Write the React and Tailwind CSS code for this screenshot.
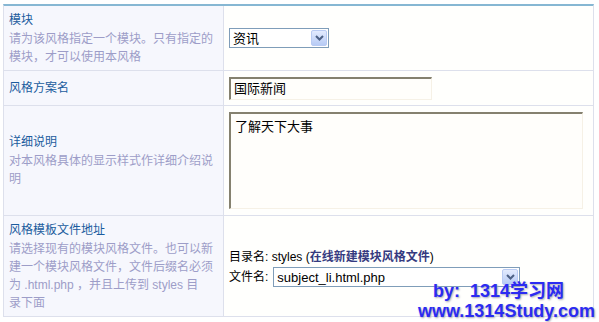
import React from 'react';

const font = { fontFamily: '"Liberation Sans", "Noto Sans CJK SC", sans-serif' };

function DropButton() {
  return (
    <div className="w-[16px] h-[16px] mr-[1px] rounded-[2px] border border-[#b9cbf3] bg-gradient-to-b from-[#e3ebfe] to-[#b7cbf5] flex items-center justify-center">
      <svg width="9" height="6" viewBox="0 0 9 6">
        <path d="M1 1 L4.5 4.5 L8 1" stroke="#4d6185" strokeWidth="2" fill="none" />
      </svg>
    </div>
  );
}

function Select({ value, className }) {
  return (
    <div className={`border border-[#7f9db9] bg-white flex items-center justify-between ${className}`}>
      <span className="pl-[3px] text-[13px] text-black leading-none">{value}</span>
      <DropButton />
    </div>
  );
}

function Label({ title, children }) {
  return (
    <div className="pl-[5px] pr-[2px] text-[12px] leading-[18px]">
      <div className="text-[#1b5c9e] mb-[1px]">{title}</div>
      {children && <div className="text-[#9d9dc8]">{children}</div>}
    </div>
  );
}

function Row({ h, label, children, last }) {
  return (
    <div className={`grid grid-cols-[220px_1fr] ${h} ${last ? '' : 'border-b border-[#dde0ec]'}`}>
      <div className="bg-[#f6f7fd] border-r border-[#dde0ec] flex items-center">{label}</div>
      <div className="bg-[#fffffd] flex items-center pl-[5px]">{children}</div>
    </div>
  );
}

export default function App() {
  return (
    <div className="w-[599px] h-[322px] bg-white relative overflow-hidden" style={font}>
      <div className="ml-[3px] mt-[4px] w-[591px] border-t-2 border-t-[#86b7d3] border-x border-b border-[#dde0ec]">
        <Row
          h="h-[65px]"
          label={
            <Label title="模块">
              请为该风格指定一个模块。只有指定的<br />模块，才可以使用本风格
            </Label>
          }
        >
          <Select value="资讯" className="w-[100px] h-[20px]" />
        </Row>

        <Row h="h-[35px]" label={<Label title="风格方案名" />}>
          <div className="w-[203px] h-[23px] border-t-2 border-l-2 border-[#85816f] border-r border-b border-r-[#f6f1e6] border-b-[#f6f1e6] bg-[#fffefb] flex items-center pl-[3px] text-[13px] text-black">
            国际新闻
          </div>
        </Row>

        <Row
          h="h-[110px]"
          label={
            <Label title="详细说明">
              对本风格具体的显示样式作详细介绍说<br />明
            </Label>
          }
        >
          <div className="w-[354px] h-[97px] border-t-2 border-l-2 border-[#85816f] border-r border-b border-r-[#f6f1e6] border-b-[#f6f1e6] bg-[#fffefb] self-start mt-[6px] pl-[4px] pt-[5px] text-[13px] leading-[16px] text-black">
            了解天下大事
          </div>
        </Row>

        <Row
          h="h-[100px]"
          last
          label={
            <Label title="风格模板文件地址">
              请选择现有的模块风格文件。也可以新<br />
              建一个模块风格文件，文件后缀名必须<br />
              为 .html.php ，并且上传到 styles 目<br />
              录下面
            </Label>
          }
        >
          <div className="text-[12px] text-black mt-[3px]">
            <div className="leading-[18px]">
              目录名:&nbsp;styles (<span className="font-bold text-[#353a80]">在线新建模块风格文件</span>)
            </div>
            <div className="flex items-center mt-[1px]">
              <span className="mr-[5px]">文件名:</span>
              <Select value="subject_li.html.php" className="w-[247px] h-[20px]" />
            </div>
          </div>
        </Row>
      </div>

      <div
        className="absolute left-[433px] top-[282px] text-[18px] font-bold leading-none text-[#2b2bf2]"
        style={{ textShadow: '1px 1px 2px #a8a8b4' }}
      >
        by:&nbsp;&nbsp;1314学习网
      </div>
      <div
        className="absolute left-[418px] top-[302px] text-[18px] font-bold leading-none text-[#2b2bf2]"
        style={{ textShadow: '1px 1px 2px #a8a8b4' }}
      >
        www.1314Study.com
      </div>
    </div>
  );
}
